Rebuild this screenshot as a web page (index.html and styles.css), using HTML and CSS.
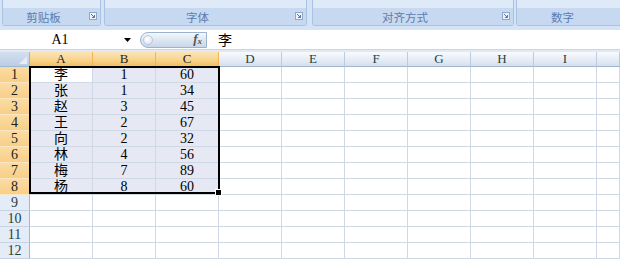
FILE: index.html
```html
<!DOCTYPE html>
<html lang="zh">
<head>
<meta charset="utf-8">
<title>Excel</title>
<link rel="stylesheet" href="styles.css">
</head>
<body>
<div class="ribbon">
  <div class="group g1"><div class="glabel">剪贴板<span class="launch"><svg width="8" height="8" viewBox="0 0 8 8"><rect x="0.5" y="0.5" width="7" height="7" fill="#eef3fa" stroke="#8ea8ca"/><path d="M2 2 L5.5 5.5 M5.5 3 V5.5 H3" stroke="#5a78a6" fill="none"/></svg></span></div></div>
  <div class="group g2"><div class="glabel">字体<span class="launch"><svg width="8" height="8" viewBox="0 0 8 8"><rect x="0.5" y="0.5" width="7" height="7" fill="#eef3fa" stroke="#8ea8ca"/><path d="M2 2 L5.5 5.5 M5.5 3 V5.5 H3" stroke="#5a78a6" fill="none"/></svg></span></div></div>
  <div class="group g3"><div class="glabel">对齐方式<span class="launch"><svg width="8" height="8" viewBox="0 0 8 8"><rect x="0.5" y="0.5" width="7" height="7" fill="#eef3fa" stroke="#8ea8ca"/><path d="M2 2 L5.5 5.5 M5.5 3 V5.5 H3" stroke="#5a78a6" fill="none"/></svg></span></div></div>
  <div class="group g4"><div class="glabel">数字</div></div>
</div>
<div class="fbar">
  <div class="namebox">A1</div>
  <div class="nbarrow"><svg width="7" height="4" viewBox="0 0 7 4"><path d="M0 0 H7 L3.5 4 Z" fill="#000"/></svg></div>
  <div class="fxpill"><span class="knob"></span><span class="fx">f<sub>x</sub></span></div>
  <div class="formula">李</div>
</div>
<div class="band"></div>
<div class="sheet">
  <div class="corner"><span class="tri"></span></div>
  <div class="ch sel">A</div><div class="ch sel">B</div><div class="ch sel">C</div><div class="ch">D</div><div class="ch">E</div><div class="ch">F</div><div class="ch">G</div><div class="ch">H</div><div class="ch">I</div><div class="ch"></div>

  <div class="rh sel">1</div><div class="c a">李</div><div class="c s">1</div><div class="c s">60</div><div class="c"></div><div class="c"></div><div class="c"></div><div class="c"></div><div class="c"></div><div class="c"></div><div class="c"></div>
  <div class="rh sel">2</div><div class="c s">张</div><div class="c s">1</div><div class="c s">34</div><div class="c"></div><div class="c"></div><div class="c"></div><div class="c"></div><div class="c"></div><div class="c"></div><div class="c"></div>
  <div class="rh sel">3</div><div class="c s">赵</div><div class="c s">3</div><div class="c s">45</div><div class="c"></div><div class="c"></div><div class="c"></div><div class="c"></div><div class="c"></div><div class="c"></div><div class="c"></div>
  <div class="rh sel">4</div><div class="c s">王</div><div class="c s">2</div><div class="c s">67</div><div class="c"></div><div class="c"></div><div class="c"></div><div class="c"></div><div class="c"></div><div class="c"></div><div class="c"></div>
  <div class="rh sel">5</div><div class="c s">向</div><div class="c s">2</div><div class="c s">32</div><div class="c"></div><div class="c"></div><div class="c"></div><div class="c"></div><div class="c"></div><div class="c"></div><div class="c"></div>
  <div class="rh sel">6</div><div class="c s">林</div><div class="c s">4</div><div class="c s">56</div><div class="c"></div><div class="c"></div><div class="c"></div><div class="c"></div><div class="c"></div><div class="c"></div><div class="c"></div>
  <div class="rh sel">7</div><div class="c s">梅</div><div class="c s">7</div><div class="c s">89</div><div class="c"></div><div class="c"></div><div class="c"></div><div class="c"></div><div class="c"></div><div class="c"></div><div class="c"></div>
  <div class="rh sel">8</div><div class="c s">杨</div><div class="c s">8</div><div class="c s">60</div><div class="c"></div><div class="c"></div><div class="c"></div><div class="c"></div><div class="c"></div><div class="c"></div><div class="c"></div>
  <div class="rh">9</div><div class="c"></div><div class="c"></div><div class="c"></div><div class="c"></div><div class="c"></div><div class="c"></div><div class="c"></div><div class="c"></div><div class="c"></div><div class="c"></div>
  <div class="rh">10</div><div class="c"></div><div class="c"></div><div class="c"></div><div class="c"></div><div class="c"></div><div class="c"></div><div class="c"></div><div class="c"></div><div class="c"></div><div class="c"></div>
  <div class="rh">11</div><div class="c"></div><div class="c"></div><div class="c"></div><div class="c"></div><div class="c"></div><div class="c"></div><div class="c"></div><div class="c"></div><div class="c"></div><div class="c"></div>
  <div class="rh">12</div><div class="c"></div><div class="c"></div><div class="c"></div><div class="c"></div><div class="c"></div><div class="c"></div><div class="c"></div><div class="c"></div><div class="c"></div><div class="c"></div>

  <div class="selbox"></div>
  <div class="handle"></div>
</div>
</body>
</html>
```

FILE: styles.css
```css
* { box-sizing: border-box; }
html, body { margin: 0; padding: 0; }
body {
  width: 620px;
  height: 259px;
  overflow: hidden;
  background: #fff;
  font-family: "Liberation Serif", "Noto Sans CJK SC", serif;
  color: #000;
}

/* ribbon */
.ribbon {
  height: 30px;
  background: #d4e3f5;
  display: flex;
  align-items: flex-start;
  padding-left: 2px;
}
.group {
  height: 26px;
  border: 1px solid #a9c2e2;
  border-top: none;
  border-radius: 0 0 3px 3px;
  background: #deeaf7;
  display: flex;
  flex-direction: column;
  justify-content: flex-end;
}
.g1 { width: 99px; }
.g2 { width: 203px; margin-left: 3px; }
.g3 { width: 202px; margin-left: 5px; }
.g4 { flex: 1; margin-left: 2px; border-right: none; border-radius: 0 0 0 3px; }
.glabel {
  position: relative;
  height: 17px;
  background: #c7d9f0;
  display: flex;
  align-items: center;
  justify-content: center;
  padding-right: 16px;
  font-family: "Noto Sans CJK SC", sans-serif;
  font-size: 11.5px;
  color: #5a7cb0;
}
.g4 .glabel { padding-right: 0; justify-content: flex-start; padding-left: 34px; }
.launch {
  position: absolute;
  right: 3px;
  top: 4px;
  width: 8px;
  height: 8px;
  display: flex;
}

/* formula bar */
.fbar {
  height: 19px;
  background: #fff;
  display: flex;
  align-items: center;
}
.namebox {
  width: 120px;
  text-align: center;
  font-size: 14px;
  line-height: 19px;
}
.nbarrow {
  width: 20px;
  display: flex;
  justify-content: center;
  align-items: center;
  padding-right: 6px;
}
.fxpill {
  width: 67px;
  height: 16px;
  border: 1px solid #9cb2d1;
  border-radius: 8px 0 0 8px;
  background: linear-gradient(#f5f8fc, #dde6f2 50%, #c9d7ea);
  display: flex;
  align-items: center;
  justify-content: space-between;
  padding: 0 4px 0 2px;
}
.knob {
  width: 10px;
  height: 10px;
  border-radius: 50%;
  border: 1px solid #b8c8de;
  background: radial-gradient(circle at 40% 40%, #ffffff, #d8e2ef);
}
.fx {
  font-family: "Liberation Serif", serif;
  font-style: italic;
  font-weight: bold;
  font-size: 13px;
  color: #555;
  line-height: 12px;
}
.fx sub { font-size: 9px; vertical-align: -1px; }
.formula {
  padding-left: 11px;
  font-family: "Noto Sans CJK SC", sans-serif;
  font-size: 14px;
  line-height: 19px;
}
.band {
  height: 3px;
  background: #e3e9f2;
  border-top: 1px solid #c8d5e6;
}

/* sheet */
.sheet {
  position: relative;
  display: grid;
  grid-template-columns: 30px repeat(9, 63px) 1fr;
  grid-template-rows: 15px repeat(12, 16px);
  font-size: 14px;
}
.sheet > div {
  border-right: 1px solid #d0d7e5;
  border-bottom: 1px solid #d0d7e5;
  text-align: center;
  line-height: 15px;
  white-space: nowrap;
  overflow: hidden;
}
.corner {
  position: relative;
  background: linear-gradient(#d3dfef, #bccde4);
  border-right-color: #9eb6ce !important;
  border-bottom-color: #9eb6ce !important;
}
.tri {
  position: absolute;
  right: 2px;
  bottom: 2px;
  width: 0;
  height: 0;
  border-left: 8px solid transparent;
  border-bottom: 8px solid #e6edf6;
}
.sheet > .ch {
  background: linear-gradient(#f9fbfd, #e4ebf4 60%, #d5dfec);
  border-right-color: #bccbdd;
  border-bottom-color: #9eb6ce;
  color: #27413e;
  font-size: 13px;
  line-height: 14px;
}
.sheet > .ch.sel {
  background: linear-gradient(#fbe4b8, #f8d48f 55%, #f1c15f);
  border-right-color: #f2b455;
  border-bottom-color: #f29536;
  color: #1e1e1e;
}
.sheet > .rh {
  background: #e4ecf7;
  border-right-color: #9eb6ce;
  border-bottom-color: #c5d3e5;
  color: #27413e;
}
.sheet > .rh.sel {
  background: linear-gradient(#fbdca4, #f8cf86);
  border-right-color: #f29536;
  border-bottom-color: #fbe6c2;
  color: #1e1e1e;
}
.c {
  font-family: "Liberation Serif", "Noto Sans CJK SC", serif;
}
.sheet > .s { background: #e6e9f3; }
.sheet > .a { background: #fff; }

.sheet > .selbox {
  position: absolute;
  left: 29px;
  top: 14px;
  width: 191px;
  height: 128px;
  border: 2px solid #000;
  background: transparent;
}
.sheet > .handle {
  position: absolute;
  left: 215px;
  top: 137px;
  width: 7px;
  height: 7px;
  background: #000;
  border: 1px solid #fff;
}
```
